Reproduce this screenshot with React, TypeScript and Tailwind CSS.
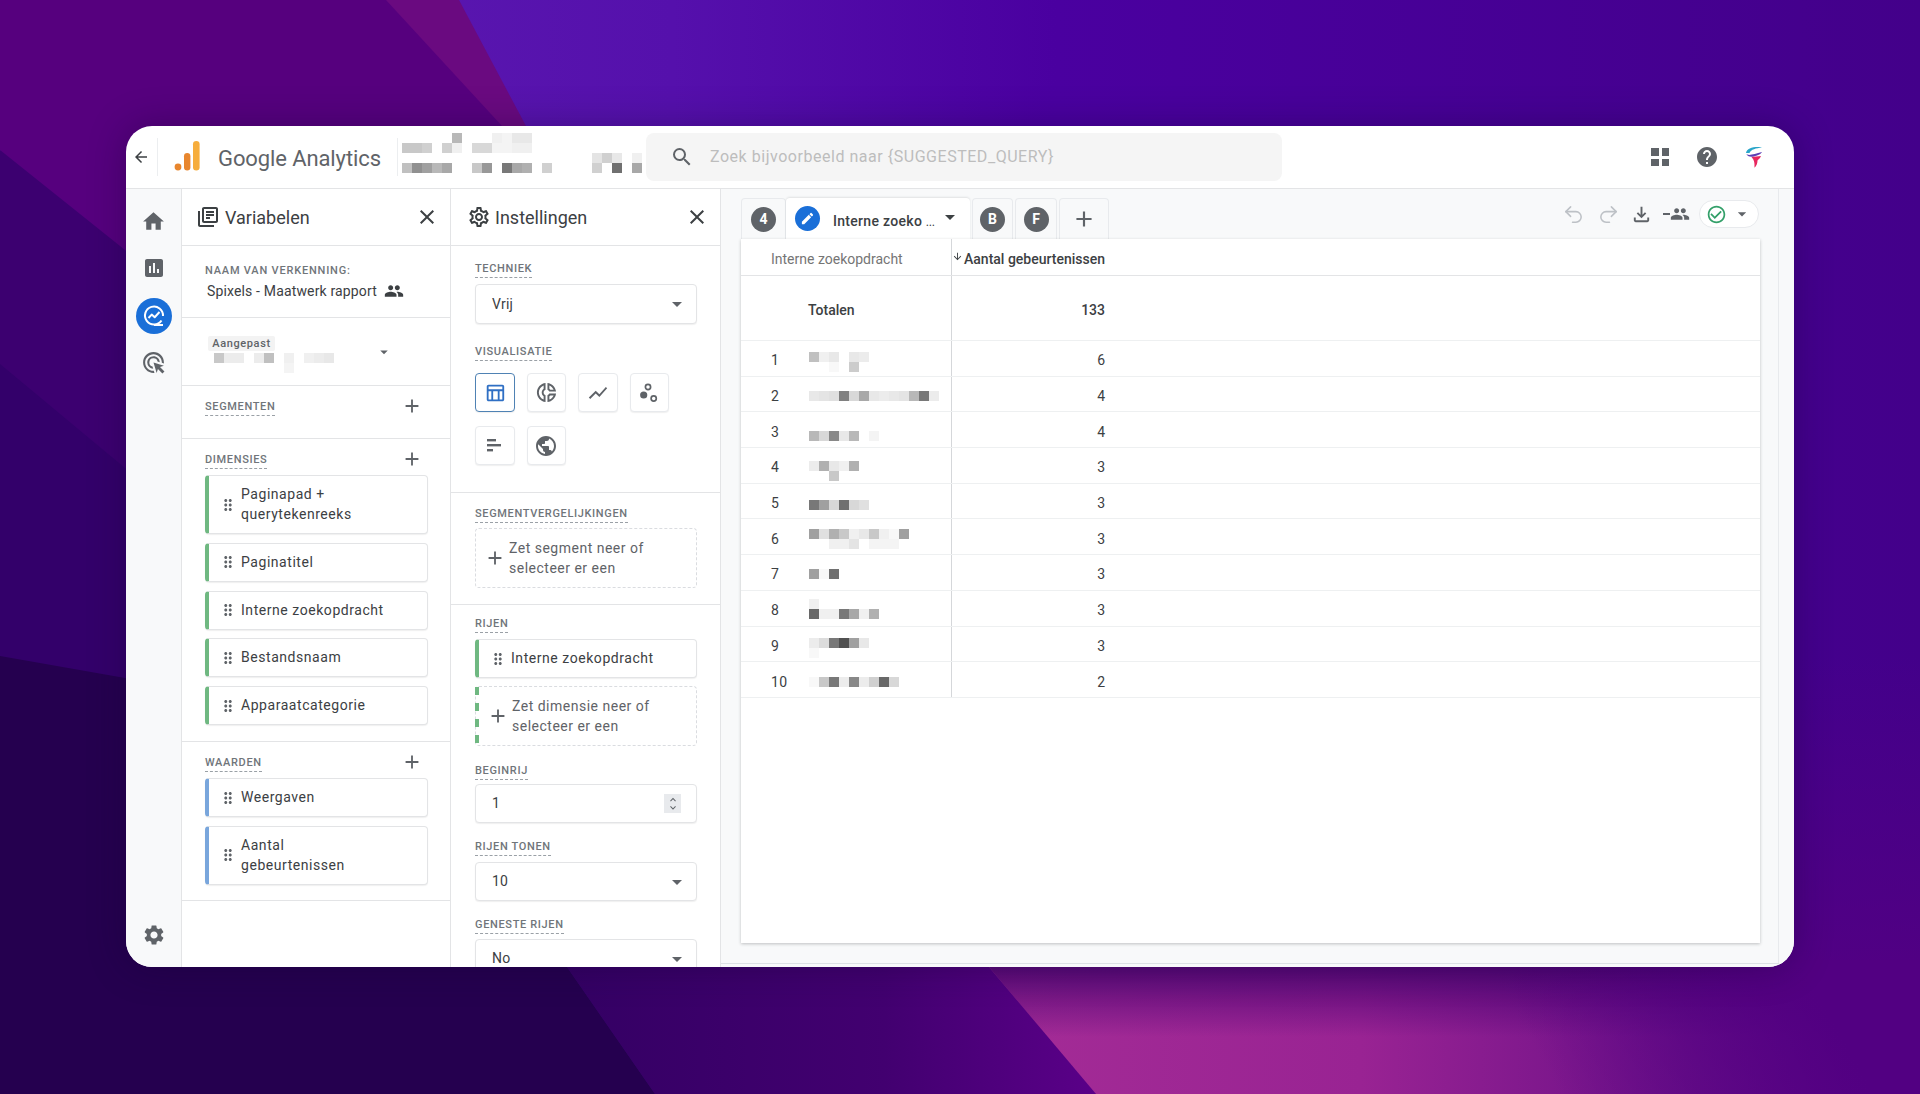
import * as React from "react";
import { Redo2, Undo2 } from "lucide-react";
import {
  MdAdd,
  MdArrowBack,
  MdArrowDownward,
  MdArrowDropDown,
  MdAssessment,
  MdCheckCircleOutline,
  MdClose,
  MdDragIndicator,
  MdEdit,
  MdHelp,
  MdHome,
  MdKeyboardArrowDown,
  MdKeyboardArrowUp,
  MdOutlineAdsClick,
  MdOutlineDonutSmall,
  MdOutlineFileDownload,
  MdOutlineLibraryBooks,
  MdOutlineSettings,
  MdOutlineTableChart,
  MdPeople,
  MdPublic,
  MdSearch,
  MdSettings,
  MdShowChart,
} from "react-icons/md";

const font = "[font-family:Roboto,'Liberation_Sans',sans-serif]";

// grey value per 10px cell, "" is an empty cell
type MosaicData = { top: number; lines: string[][] };

function Mosaic({ top, lines }: MosaicData) {
  return (
    <div className="flex flex-col self-start" style={{ marginTop: top }}>
      {lines.map((line, i) => (
        <div key={i} className="flex h-[10px]">
          {line.map((c, j) => (
            <div
              key={j}
              className="h-[10px] w-[10px]"
              style={{ backgroundColor: c ? `#${c}${c}${c}` : "transparent" }}
            />
          ))}
        </div>
      ))}
    </div>
  );
}

const headerMosaic: string[][] = [
  ["", "", "", "", "", "b8", "", "", "", "f0", "f4", "e8", "e8"],
  ["c8", "c8", "d0", "", "d0", "f0", "", "d8", "d8", "f4", "f4", "f0", "f0"],
  ["", "", "", "", "", "", "", "", "", "", "", "", "", "", "", "", "", "", "", "e4", "d0", "e8", "", "f0"],
  ["c0", "90", "a0", "b8", "a8", "", "", "c8", "98", "", "78", "a8", "b0", "", "d0", "", "", "", "", "d0", "", "70", "", "a8"],
];

const rows: { n: number; v: number; m: MosaicData }[] = [
  { n: 1, v: 6, m: { top: 11, lines: [["c0", "f0", "e8", "", "e8", "ec"], ["", "", "f8", "", "cc"]] } },
  { n: 2, v: 4, m: { top: 14, lines: [["e8", "e4", "e0", "80", "d8", "a8", "e8", "ec", "e8", "e4", "b8", "78", "ec"]] } },
  { n: 3, v: 4, m: { top: 19, lines: [["b8", "d8", "88", "e8", "b8", "", "f4"]] } },
  { n: 4, v: 3, m: { top: 13, lines: [["ec", "b0", "e8", "f0", "b0"], ["", "", "c8"]] } },
  { n: 5, v: 3, m: { top: 16, lines: [["78", "a0", "d8", "70", "d8", "e0"]] } },
  { n: 6, v: 3, m: { top: 10, lines: [["a0", "e0", "b0", "c8", "f0", "e8", "c8", "f0", "f8", "a0"], ["", "", "f0", "f0", "e4", "", "f4", "f4", "f4"]] } },
  { n: 7, v: 3, m: { top: 14, lines: [["a0", "f8", "70"]] } },
  { n: 8, v: 3, m: { top: 8, lines: [["f0"], ["68", "f0", "f0", "78", "a8", "f0", "b0"]] } },
  { n: 9, v: 3, m: { top: 11, lines: [["ec", "dc", "78", "50", "a0", "e8"], ["f8"]] } },
  { n: 10, v: 2, m: { top: 15, lines: [["f8", "c8", "78", "ec", "88", "ec", "d0", "68", "d8"]] } },
];

function Wallpaper() {
  return (
    <svg className="absolute inset-0 h-full w-full" viewBox="0 0 1920 1094" preserveAspectRatio="none">
      <defs>
        <linearGradient id="violet" x1="0" y1="0" x2="1" y2="0">
          <stop offset="0" stopColor="#5f20b4" />
          <stop offset="0.35" stopColor="#5510ac" />
          <stop offset="0.55" stopColor="#4a00a0" />
          <stop offset="1" stopColor="#43008a" />
        </linearGradient>
        <linearGradient id="rightfade" x1="0" y1="0" x2="0" y2="1">
          <stop offset="0.6" stopColor="#560080" stopOpacity="0" />
          <stop offset="1" stopColor="#560080" stopOpacity="1" />
        </linearGradient>
        <linearGradient id="mid" x1="0" y1="0" x2="1" y2="0">
          <stop offset="0" stopColor="#340064" />
          <stop offset="0.6" stopColor="#420070" />
          <stop offset="1" stopColor="#5a0088" />
        </linearGradient>
        <linearGradient id="magenta" gradientUnits="userSpaceOnUse" x1="989" y1="0" x2="1920" y2="0">
          <stop offset="0" stopColor="#a42c96" />
          <stop offset="0.4" stopColor="#992393" />
          <stop offset="0.75" stopColor="#6b1088" />
          <stop offset="1" stopColor="#580086" />
        </linearGradient>
        <linearGradient id="magentaTop" x1="0" y1="0" x2="0" y2="1">
          <stop offset="0" stopColor="#43006f" stopOpacity="0.8" />
          <stop offset="0.55" stopColor="#43006f" stopOpacity="0" />
        </linearGradient>
        <linearGradient id="cornerFade" gradientUnits="userSpaceOnUse" x1="1560" y1="1094" x2="1800" y2="960">
          <stop offset="0" stopColor="#520082" stopOpacity="0" />
          <stop offset="1" stopColor="#520082" stopOpacity="1" />
        </linearGradient>
      </defs>
      <rect width="1920" height="1094" fill="url(#violet)" />
      <rect width="1920" height="1094" fill="url(#rightfade)" />
      <path d="M0 0H459L526 126L565 200L300 500L0 150Z" fill="#6a0a80" />
      <path d="M0 0H386L502 126L540 200L300 500L0 150Z" fill="#56007e" />
      <path d="M0 150L500 550L1100 1094H0Z" fill="#3c0070" />
      <path d="M0 364L500 780L700 1094H0Z" fill="#33006a" />
      <path d="M0 656L125 678L520 760L567 967L655 1094H0Z" fill="#25004f" />
      <path d="M567 967L900 700L1000 900L1096 1094H655Z" fill="url(#mid)" />
      <path d="M989 967H1920V1094H1096Z" fill="url(#magenta)" />
      <path d="M989 967H1920V1094H1096Z" fill="url(#magentaTop)" />
      <rect x="1500" y="960" width="420" height="134" fill="url(#cornerFade)" />
    </svg>
  );
}

function ExploreIcon() {
  return (
    <svg width="24" height="24" viewBox="0 0 24 24" fill="none" stroke="#fff" strokeWidth="2">
      <path d="M19.5 16.5A9 9 0 1 1 21 12" />
      <path d="M6.5 14l3.2-3.4 3 2.6L17.5 8" strokeLinejoin="round" />
      <path d="M12 21h9" />
    </svg>
  );
}

function GaLogo() {
  return (
    <svg width="30" height="34" viewBox="0 0 30 34" className="shrink-0">
      <circle cx="6" cy="27" r="3.4" fill="#e8862e" />
      <rect x="12" y="13" width="6.4" height="17.5" rx="3.2" fill="#e8862e" />
      <rect x="21" y="1" width="6.6" height="29.5" rx="3.3" fill="#f6ad3c" />
    </svg>
  );
}

function SpixelsLogo() {
  return (
    <svg width="20" height="22" viewBox="0 0 20 22" fill="none">
      <path d="M2 7C3 2 9 0.5 18 1.2C12 2.5 7 3 5.5 7Z" fill="#2aa5c9" />
      <path d="M2 7.5C4 10.5 10 8 18 6C17 8.5 13 9.5 10 10.5C6 11.5 3 10 2 7.5Z" fill="#5c3fb5" />
      <path d="M7.5 11L17 10C16 13 14 13.5 13.5 14.5C13.5 17 12.5 20 10.5 21.8C10.5 18 11 15 7.5 11Z" fill="#e8275f" />
    </svg>
  );
}

function ScatterIcon() {
  return (
    <svg width="24" height="24" viewBox="0 0 24 24" fill="none" stroke="currentColor" strokeWidth="1.7">
      <circle cx="11" cy="6" r="2.6" />
      <circle cx="6.7" cy="14" r="3.6" fill="currentColor" stroke="none" />
      <circle cx="16.7" cy="17.5" r="2.6" />
    </svg>
  );
}

function SectionLabel({ children }: { children: React.ReactNode }) {
  return (
    <span className="inline-block border-b border-dashed border-[#9aa0a6] pb-[2px] text-[11px] leading-[13px] font-medium tracking-[0.65px] text-[#70757a] uppercase">
      {children}
    </span>
  );
}

function Chip({ label, color, h }: { label: React.ReactNode; color: "green" | "blue"; h: string }) {
  return (
    <div
      className={`flex items-center rounded-[4px] border border-[#e3e4e6] border-l-4 bg-white shadow-[0_1px_1px_rgba(60,64,67,0.08)] ${h} ${
        color === "green" ? "border-l-[#6fb881]" : "border-l-[#79a6dc]"
      }`}
    >
      <MdDragIndicator size={18} className="ml-[10px] shrink-0 text-[#5f6368]" />
      <span className="ml-[4px] -mt-[1px] text-[14px] leading-[20px] tracking-[0.55px] text-[#3c4043]">{label}</span>
    </div>
  );
}

function SectionHead({ label }: { label: string }) {
  return (
    <div className="flex h-[21px] items-center justify-between pr-[5px]">
      <SectionLabel>{label}</SectionLabel>
      <MdAdd size={22} className="-mt-[3px] text-[#5f6368]" />
    </div>
  );
}

function SelectBox({ value, className }: { value: string; className?: string }) {
  return (
    <div className={`flex h-[39px] shrink-0 items-center justify-between rounded-[4px] border border-[#e3e4e6] bg-white pr-[7px] pl-[16px] text-[14px] tracking-[0.25px] text-[#3c4043] shadow-[0_1px_1px_rgba(60,64,67,0.08)] ${className ?? ""}`}>
      <span>{value}</span>
      <MdArrowDropDown size={24} className="text-[#5f6368]" />
    </div>
  );
}

function VizButton({ active, children }: { active?: boolean; children: React.ReactNode }) {
  return (
    <div
      className={`flex h-[39px] w-[39.5px] items-center justify-center rounded-[4px] border bg-white shadow-[0_1px_1px_rgba(60,64,67,0.08)] ${
        active ? "border-[#4f82b4] text-[#2f6fc4]" : "border-[#e8eaed] text-[#5f6368]"
      }`}
    >
      {children}
    </div>
  );
}

function DropZone({ children, mark, className }: { children: React.ReactNode; mark?: boolean; className?: string }) {
  return (
    <div className={`relative flex h-[60px] shrink-0 items-center rounded-[4px] border border-dashed border-[#dadce0] bg-white ${className ?? ""}`}>
      {mark && <div className="absolute top-0 bottom-0 -left-px w-[4px] bg-[repeating-linear-gradient(180deg,#6fb881_0,#6fb881_8px,transparent_8px,transparent_16px)]" />}
      <MdAdd size={22} className={`shrink-0 text-[#5f6368] ${mark ? "ml-[11px]" : "ml-[8px]"}`} />
      <span className="ml-[3px] text-[14px] leading-[20px] tracking-[0.5px] text-[#5f6368]">{children}</span>
    </div>
  );
}

function TabBadge({ children }: { children: React.ReactNode }) {
  return (
    <div className="flex h-[25px] w-[25px] items-center justify-center rounded-full bg-[#5f6368] text-[14px] font-bold text-white">
      {children}
    </div>
  );
}

function InactiveTab({ children, w }: { children: React.ReactNode; w: string }) {
  return (
    <div className={`flex h-[41px] items-center justify-center rounded-t-[4px] border-x border-t border-[#e8eaed] bg-[#f8f9fa] ${w}`}>
      {children}
    </div>
  );
}

export default function App() {
  return (
    <div className={`relative h-screen w-full overflow-hidden px-[126px] pt-[126px] pb-[127px] ${font}`}>
      <Wallpaper />
      <div className="relative flex h-full flex-col overflow-hidden rounded-[26px] bg-white shadow-[0_0_36px_rgba(20,0,50,0.35)]">
        {/* top bar */}
        <header className="flex h-[63px] shrink-0 items-center border-b border-[#e3e4e6]">
          <MdArrowBack size={18} className="ml-[6px] shrink-0 text-[#3c4043]" />
          <div className="ml-[7px] h-[38px] w-px bg-[#eceef0]" />
          <div className="ml-[14px]">
            <GaLogo />
          </div>
          <span className="ml-[16px] w-[162px] pt-[3px] text-[22px] tracking-[-0.1px] whitespace-nowrap text-[#5f6368]">Google Analytics</span>
          <div className="ml-[17px] h-[38px] w-px bg-[#eceef0]" />
          <div className="ml-[4px] w-[244px] self-start pt-[7px]">
            <Mosaic top={0} lines={headerMosaic} />
          </div>
          <div className="flex h-[48px] w-[636px] items-center rounded-[8px] bg-[#f5f5f5]">
            <MdSearch size={24} className="ml-[24px] shrink-0 text-[#5f6368]" />
            <span className="ml-[16px] text-[16px] tracking-[0.53px] text-[#bdbdbd]">Zoek bijvoorbeeld naar {"{SUGGESTED_QUERY}"}</span>
          </div>
          <div className="ml-auto flex items-center pr-[30px]">
            <div className="grid h-[18px] w-[18px] grid-cols-2 gap-[3px]">
              <div className="bg-[#5f6368]" />
              <div className="bg-[#5f6368]" />
              <div className="bg-[#5f6368]" />
              <div className="bg-[#5f6368]" />
            </div>
            <MdHelp size={24} className="ml-[26px] text-[#5f6368]" />
            <div className="ml-[25px]">
              <SpixelsLogo />
            </div>
          </div>
        </header>

        <div className="flex min-h-0 flex-1">
          {/* rail */}
          <nav className="flex w-[56px] shrink-0 flex-col items-center border-r border-[#e3e4e6] bg-[#f8f9fa] pt-[20px] pb-[20px] text-[#5f6368]">
            <MdHome size={25} />
            <MdAssessment size={24} className="mt-[22px]" />
            <div className="mt-[18px] flex h-[36px] w-[36px] items-center justify-center rounded-full bg-[#1a6fd8]">
              <ExploreIcon />
            </div>
            <MdOutlineAdsClick size={25} className="mt-[16px]" />
            <MdSettings size={24} className="mt-auto" />
          </nav>

          {/* variabelen */}
          <aside className="flex w-[269px] shrink-0 flex-col border-r border-[#e3e4e6]">
            <div className="flex h-[57px] shrink-0 items-center border-b border-[#e3e4e6] pr-[11px] pl-[14px]">
              <MdOutlineLibraryBooks size={24} className="text-[#3c4043]" />
              <span className="ml-[5px] text-[18px] text-[#3c4043]">Variabelen</span>
              <MdClose size={24} className="ml-auto text-[#3c4043]" />
            </div>
            <div className="h-[72px] shrink-0 border-b border-[#e3e4e6] pt-[18px] pl-[23px]">
              <div className="text-[11px] leading-[14px] font-medium tracking-[0.8px] text-[#70757a] uppercase">Naam van verkenning:</div>
              <div className="mt-[3px] flex items-center pl-[2px] text-[14px] leading-[20px] tracking-[0.15px] text-[#3c4043]">
                Spixels - Maatwerk rapport
                <MdPeople size={20} className="ml-[7px] text-[#3c4043]" />
              </div>
            </div>
            <div className="relative h-[68px] shrink-0 border-b border-[#e3e4e6] pt-[18px] pl-[27px]">
              <span className="-ml-[1px] flex h-[15px] w-[67px] items-center justify-center rounded-[2px] bg-[#f3f3f3] text-[11px] leading-[14px] font-medium tracking-[0.6px] text-[#5f6368]">
                Aangepast
              </span>
              <div className="ml-[5px]">
                <Mosaic top={2} lines={[["c8", "ec", "ec", "", "ec", "c0", "", "f0", "", "f0", "ec", "e8"], ["", "", "", "", "", "", "", "f4"]]} />
              </div>
              <MdArrowDropDown size={18} className="absolute top-[25px] left-[193px] text-[#5f6368]" />
            </div>
            <div className="h-[53px] shrink-0 border-b border-[#e3e4e6] pt-[11px] pr-[22px] pl-[23px]">
              <SectionHead label="Segmenten" />
            </div>
            <div className="flex h-[303px] shrink-0 flex-col border-b border-[#e3e4e6] pt-[11px] pr-[22px] pl-[23px]">
              <SectionHead label="Dimensies" />
              <div className="mt-[4px] flex flex-col gap-[8.75px]">
                <Chip color="green" h="h-[59px]" label={<>Paginapad +<br />querytekenreeks</>} />
                <Chip color="green" h="h-[39px]" label="Paginatitel" />
                <Chip color="green" h="h-[39px]" label="Interne zoekopdracht" />
                <Chip color="green" h="h-[39px]" label="Bestandsnaam" />
                <Chip color="green" h="h-[39px]" label="Apparaatcategorie" />
              </div>
            </div>
            <div className="flex h-[159px] shrink-0 flex-col border-b border-[#e3e4e6] pt-[11px] pr-[22px] pl-[23px]">
              <SectionHead label="Waarden" />
              <div className="mt-[4px] flex flex-col gap-[8.75px]">
                <Chip color="blue" h="h-[39px]" label="Weergaven" />
                <Chip color="blue" h="h-[59px]" label={<>Aantal<br />gebeurtenissen</>} />
              </div>
            </div>
          </aside>

          {/* instellingen */}
          <aside className="flex w-[270px] shrink-0 flex-col overflow-hidden border-r border-[#e3e4e6]">
            <div className="flex h-[57px] shrink-0 items-center border-b border-[#e3e4e6] pr-[11px] pl-[16px]">
              <MdOutlineSettings size={24} className="text-[#3c4043]" />
              <span className="ml-[4px] text-[18px] text-[#3c4043]">Instellingen</span>
              <MdClose size={24} className="ml-auto text-[#3c4043]" />
            </div>
            <div className="flex h-[247px] shrink-0 flex-col items-start border-b border-[#e3e4e6] pt-[16px] pr-[23px] pl-[24px]">
              <SectionLabel>Techniek</SectionLabel>
              <SelectBox value="Vrij" className="mt-[6px] h-[40px] w-full" />
              <div className="mt-[14px]">
                <SectionLabel>Visualisatie</SectionLabel>
              </div>
              <div className="mt-[11px] grid grid-cols-[repeat(4,39.5px)] gap-x-[12px] gap-y-[14px]">
                <VizButton active>
                  <MdOutlineTableChart size={22} />
                </VizButton>
                <VizButton>
                  <MdOutlineDonutSmall size={23} />
                </VizButton>
                <VizButton>
                  <MdShowChart size={22} />
                </VizButton>
                <VizButton>
                  <ScatterIcon />
                </VizButton>
                <VizButton>
                  <svg width="18" height="18" viewBox="0 0 18 18" fill="currentColor">
                    <rect x="1" y="2" width="9" height="2.4" />
                    <rect x="1" y="7" width="14" height="2.4" />
                    <rect x="1" y="12" width="6" height="2.4" />
                  </svg>
                </VizButton>
                <VizButton>
                  <MdPublic size={24} />
                </VizButton>
              </div>
            </div>
            <div className="flex h-[112px] shrink-0 flex-col items-start border-b border-[#e3e4e6] pt-[14px] pr-[23px] pl-[24px]">
              <SectionLabel>Segmentvergelijkingen</SectionLabel>
              <DropZone className="mt-[5px] w-full">
                Zet segment neer of
                <br />
                selecteer er een
              </DropZone>
            </div>
            <div className="flex flex-col items-start pt-[12px] pr-[23px] pl-[24px]">
              <SectionLabel>Rijen</SectionLabel>
              <div className="mt-[6px] w-full">
                <Chip color="green" h="h-[39px]" label="Interne zoekopdracht" />
              </div>
              <DropZone mark className="mt-[8px] w-full">
                Zet dimensie neer of
                <br />
                selecteer er een
              </DropZone>
              <div className="mt-[11px]">
                <SectionLabel>Beginrij</SectionLabel>
              </div>
              <div className="mt-[3px] flex h-[39px] w-full shrink-0 items-center justify-between rounded-[4px] border border-[#e3e4e6] bg-white pr-[15px] pl-[16px] text-[14px] text-[#3c4043] shadow-[0_1px_1px_rgba(60,64,67,0.08)]">
                <span>1</span>
                <div className="flex h-[19px] w-[17px] flex-col items-center justify-center bg-[#e8eaed] text-[#5f6368]">
                  <MdKeyboardArrowUp size={12} className="-mb-[2px]" />
                  <MdKeyboardArrowDown size={12} className="-mt-[2px]" />
                </div>
              </div>
              <div className="mt-[10px]">
                <SectionLabel>Rijen tonen</SectionLabel>
              </div>
              <SelectBox value="10" className="mt-[5px] w-full" />
              <div className="mt-[10px]">
                <SectionLabel>Geneste rijen</SectionLabel>
              </div>
              <SelectBox value="No" className="mt-[4px] w-full" />
            </div>
          </aside>

          {/* canvas */}
          <main className="flex min-w-0 flex-1 bg-[#f8f9fa]">
            <div className="flex w-[1058px] shrink-0 flex-col border-r border-[#e8eaed] pt-[9px] pr-[19px] pl-[20px]">
              <div className="flex h-[41px] shrink-0 items-start justify-between">
                <div className="flex items-end gap-[2px]">
                  <InactiveTab w="w-[45px]">
                    <TabBadge>4</TabBadge>
                  </InactiveTab>
                  <div className="-ml-[2px] flex h-[41px] w-[184px] items-center rounded-t-[4px] bg-white pl-[9px] shadow-[0_-1px_2px_rgba(60,64,67,0.12)]">
                    <div className="flex h-[25px] w-[25px] items-center justify-center rounded-full bg-[#1a6fd8]">
                      <MdEdit size={15} className="text-white" />
                    </div>
                    <span className="ml-[13px] pt-[6px] text-[14px] font-medium tracking-[0.3px] whitespace-nowrap text-[#3c4043]">
                      Interne zoeko <span className="text-[10px]">...</span>
                    </span>
                    <MdArrowDropDown size={24} className="-mt-[3px] ml-[3px] text-[#3c4043]" />
                  </div>
                  <InactiveTab w="w-[41px]">
                    <TabBadge>B</TabBadge>
                  </InactiveTab>
                  <InactiveTab w="w-[42px]">
                    <TabBadge>F</TabBadge>
                  </InactiveTab>
                  <InactiveTab w="w-[50px]">
                    <MdAdd size={26} className="text-[#5f6368]" />
                  </InactiveTab>
                </div>
                <div className="mt-[2px] flex items-center">
                  <Undo2 size={23} strokeWidth={1.6} className="text-[#bdc1c6]" />
                  <Redo2 size={23} strokeWidth={1.6} className="ml-[12px] text-[#bdc1c6]" />
                  <MdOutlineFileDownload size={23} className="ml-[10px] text-[#5f6368]" />
                  <div className="ml-[10px] flex items-center text-[#5f6368]">
                    <div className="h-[2px] w-[7px] bg-[#5f6368]" />
                    <MdPeople size={20} />
                  </div>
                  <div className="ml-[9px] flex h-[28px] w-[60px] items-center rounded-full border border-[#e8eaed] bg-white pl-[6px]">
                    <MdCheckCircleOutline size={21} className="text-[#34a06a]" />
                    <MdArrowDropDown size={20} className="ml-[5px] text-[#5f6368]" />
                  </div>
                </div>
              </div>
              <div className="h-[704px] w-[1019px] shrink-0 bg-white text-[14px] shadow-[0_1px_3px_rgba(60,64,67,0.3)]">
                <div className="flex h-[37px] border-b border-[#e3e4e6]">
                  <div className="flex w-[211px] items-center border-r border-[#d5d7da] pt-[5px] pl-[30px] text-[#757575]">Interne zoekopdracht</div>
                  <div className="flex w-[153px] items-center justify-end pt-[5px] font-medium text-[#3c4043]">
                    <MdArrowDownward size={11} className="mr-[1px] -mt-[6px]" />
                    Aantal gebeurtenissen
                  </div>
                </div>
                <div className="flex h-[65px] border-b border-[#eef0f1]">
                  <div className="flex w-[211px] items-center border-r border-[#d5d7da] pt-[4px] pl-[67px] font-medium text-[#3c4043]">Totalen</div>
                  <div className="flex w-[153px] items-center justify-end pt-[4px] font-medium text-[#3c4043]">133</div>
                </div>
                {rows.map((r) => (
                  <div key={r.n} className="flex h-[35.7px] border-b border-[#eef0f1]">
                    <div className="flex w-[211px] items-center border-r border-[#d5d7da]">
                      <span className="w-[68px] pt-[5px] pl-[30px] tracking-[0.4px] text-[#3c4043]">{r.n}</span>
                      <Mosaic {...r.m} />
                    </div>
                    <div className="flex w-[153px] items-center justify-end pt-[5px] text-[#3c4043]">{r.v}</div>
                  </div>
                ))}
              </div>
              <div className="mt-[20px] h-px w-[1058px] shrink-0 -translate-x-[20px] bg-[#dde1e5]" />
            </div>
          </main>
        </div>
      </div>
    </div>
  );
}
